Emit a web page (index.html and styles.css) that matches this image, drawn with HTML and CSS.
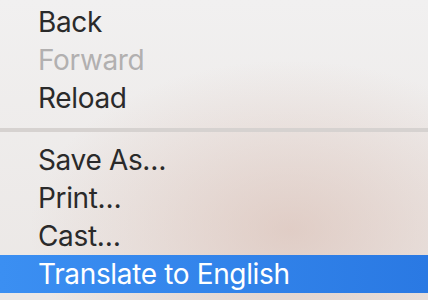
FILE: index.html
```html
<!DOCTYPE html>
<html lang="en">
<head>
  <meta charset="UTF-8">
  <title>Context Menu</title>
  <link rel="stylesheet" href="styles.css">
</head>
<body>
  <div class="menu">
    <div class="item">Back</div>
    <div class="item disabled">Forward</div>
    <div class="item">Reload</div>
    <div class="separator"></div>
    <div class="item">Save As…</div>
    <div class="item">Print…</div>
    <div class="item">Cast…</div>
    <div class="item active">Translate to English</div>
  </div>
</body>
</html>
```

FILE: styles.css
```css
body {
  margin: 0;
  width: 428px;
  height: 300px;
  overflow: hidden;
  font-family: 'Inter', 'Liberation Sans', sans-serif;
  background:
    radial-gradient(ellipse 260px 170px at 290px 230px, rgba(214, 182, 170, 0.55), rgba(214, 182, 170, 0) 100%),
    linear-gradient(180deg, #f1f0f0 0%, #ebe7e5 100%);
}

.menu {
  padding-top: 3px;
}

.item {
  height: 38px;
  line-height: 38px;
  padding-left: 38px;
  font-size: 28px;
  letter-spacing: -0.35px;
  color: #2a2a2a;
  white-space: nowrap;
}

.item.disabled {
  color: #b2b0b0;
}

.item.active {
  color: #fff;
  background: linear-gradient(90deg, #3b8ff2, #2a79e3);
}

.separator {
  height: 4px;
  margin: 11px 0 9px;
  background: #d6d2d0;
}
```
